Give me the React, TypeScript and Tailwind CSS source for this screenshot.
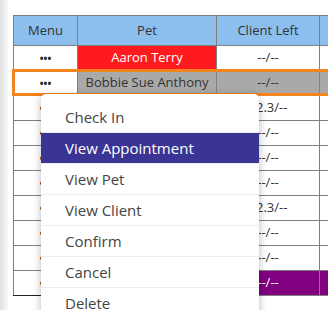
import React from 'react';

type Row = {
  pet: string;
  left: string;
  petCls?: string;
  leftCls?: string;
  lastCls?: string;
};

// rows under the open menu keep their pet column blank: it is covered anyway
const rows: Row[] = [
  { pet: 'Aaron Terry', left: '--/--', petCls: 'bg-[#ff1a1f] text-white' },
  { pet: 'Bobbie Sue Anthony', left: '--/--', petCls: 'bg-[#a9a9a9]', leftCls: 'bg-[#a9a9a9]', lastCls: 'bg-[#a9a9a9]' },
  { pet: '', left: '12.3/--' },
  { pet: '', left: '--/--' },
  { pet: '', left: '--/--' },
  { pet: '', left: '--/--' },
  { pet: '', left: '12.3/--' },
  { pet: '', left: '--/--' },
  { pet: '', left: '--/--' },
  { pet: '', left: '--/--', petCls: 'bg-[#800080] text-white', leftCls: 'bg-[#800080] text-white', lastCls: 'bg-[#800080]' },
];

const menuItems = ['Check In', 'View Appointment', 'View Pet', 'View Client', 'Confirm', 'Cancel', 'Delete'];

export default function App() {
  return (
    <div className="relative w-[328px] h-[310px] overflow-hidden bg-white flex" style={{ fontFamily: '"Open Sans", "Noto Sans", sans-serif' }}>
      {/* left gutter */}
      <div className="w-2 h-full shrink-0 bg-gradient-to-r from-[#e0e0e0] to-[#f7f7f7]" />

      {/* grid */}
      <div className="relative ml-[5px] mt-[15px] shrink-0">
        <table className="table-fixed border-collapse w-[406px] text-[13px] text-[#333]">
          <colgroup>
            <col className="w-[64px]" />
            <col className="w-[139px]" />
            <col className="w-[103px]" />
            <col className="w-[100px]" />
          </colgroup>
          <thead>
            <tr className="h-[30px] bg-[#8cbfee]">
              <th className="border border-[#7f7f7f] font-normal">Menu</th>
              <th className="border border-[#7f7f7f] font-normal">Pet</th>
              <th className="border border-[#7f7f7f] font-normal">Client Left</th>
              <th className="border border-[#7f7f7f] font-normal"></th>
            </tr>
          </thead>
          <tbody>
            {rows.map((r, i) => {
              const last = i === rows.length - 1;
              return (
                <tr key={i} className="h-[25px] text-center">
                  <td className={`border border-[#808080] text-[10px] font-bold text-[#222] ${last ? 'border-b-[#222]' : ''}`}>•••</td>
                  <td className={`border border-[#808080] ${r.petCls ?? ''}`}>{r.pet}</td>
                  <td className={`border border-[#808080] ${r.leftCls ?? ''}`}>{r.left}</td>
                  <td className={`border border-[#808080] ${r.lastCls ?? ''}`}></td>
                </tr>
              );
            })}
          </tbody>
        </table>

        {/* selected row outline */}
        <div className="absolute left-[-1px] top-[54px] w-[420px] h-[27px] border-[3px] border-[#f5841f] pointer-events-none" />
      </div>

      {/* context menu */}
      <div className="absolute left-[41px] top-[94px] w-[218px] bg-white rounded-[5px] shadow-[0_2px_8px_rgba(0,0,0,0.28)] pt-2 text-[15px] text-[#444]">
        {menuItems.map((m) => (
          <div
            key={m}
            className={`h-[31px] pl-6 flex items-center border-b border-[#ececec] ${m === 'View Appointment' ? 'bg-[#3a3594] text-white border-[#3a3594]' : ''}`}
          >
            {m}
          </div>
        ))}
      </div>
    </div>
  );
}
